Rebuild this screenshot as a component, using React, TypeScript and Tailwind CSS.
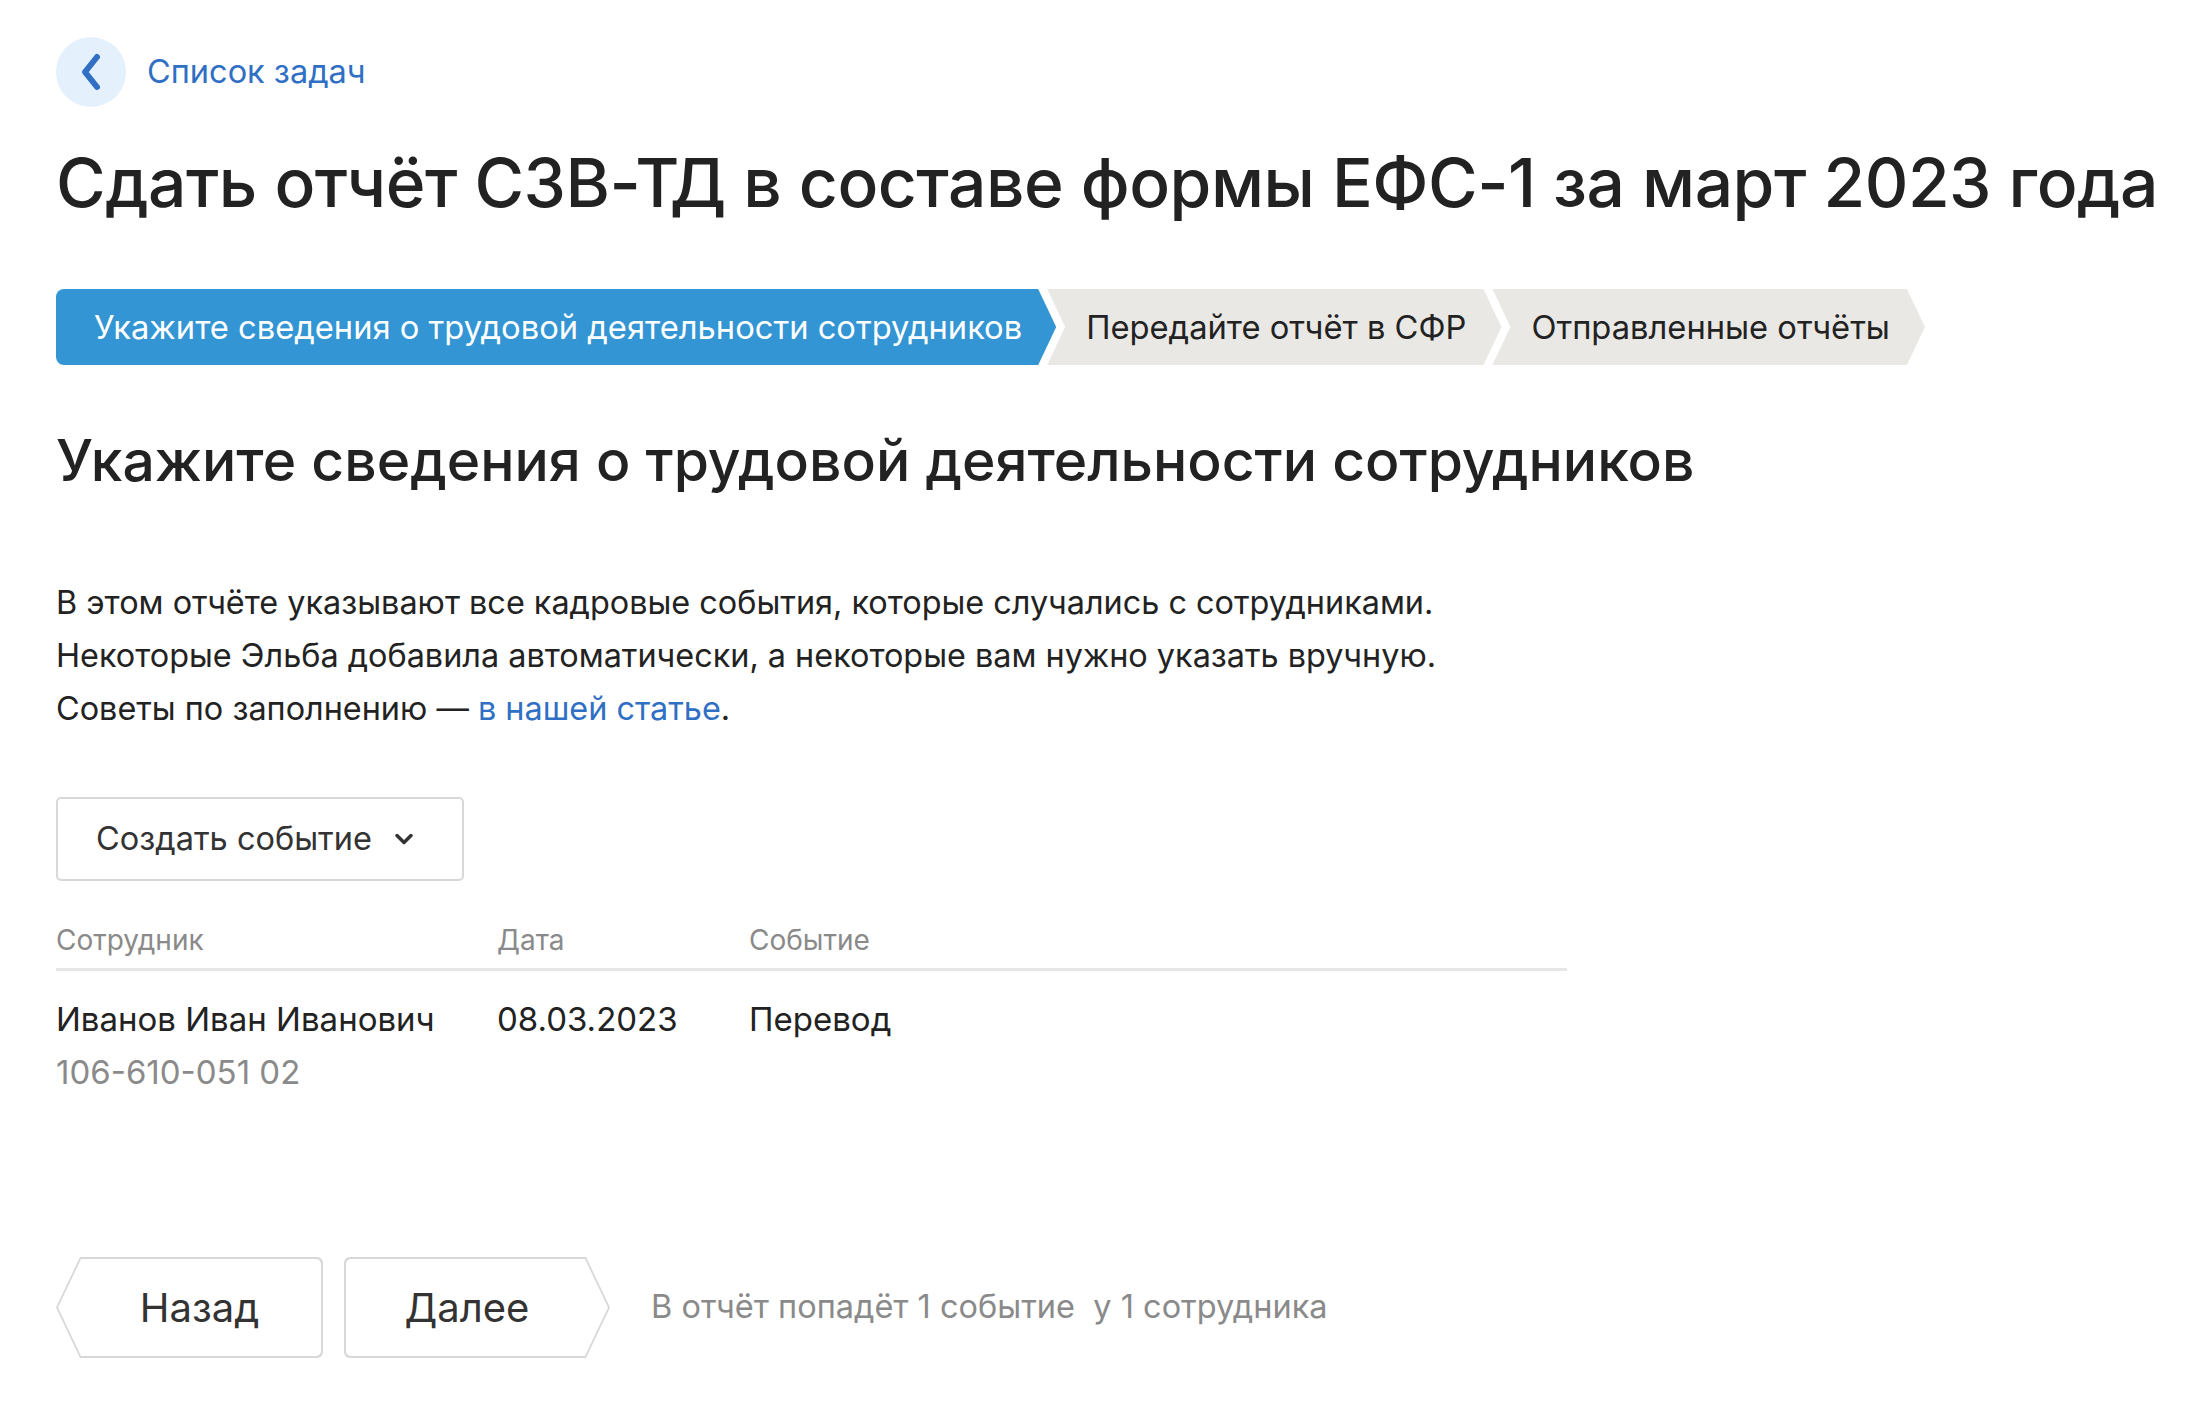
import { ChevronDown } from 'lucide-react';

const steps = [
    { title: "Укажите сведения о трудовой деятельности сотрудников", active: true },
    { title: "Передайте отчёт в СФР", active: false },
    { title: "Отправленные отчёты", active: false },
];

function Stepper() {
    return (
        <div className="flex flex-row h-[76px]">
            {steps.map((step, i) => (
                <div
                    key={step.title}
                    className={
                        i === 0
                            ? "flex items-center h-full pl-[38px] pr-[34px] rounded-l-lg bg-[#3395d3] text-white [clip-path:polygon(0_0,calc(100%-18px)_0,100%_50%,calc(100%-18px)_100%,0_100%)]"
                            : "flex items-center h-full -ml-[9px] pl-[39px] pr-[35px] bg-[#e9e8e5] text-[#222222] [clip-path:polygon(0_0,calc(100%-18px)_0,100%_50%,calc(100%-18px)_100%,0_100%,18px_50%)]"
                    }
                >
                    <span className="text-[32.7px] leading-none whitespace-nowrap">{step.title}</span>
                </div>
            ))}
        </div>
    );
}

export default function App() {
    return (
        <main className="min-h-[1406px] w-full bg-white pl-14 pt-[37px] text-[#222222] font-['Inter','Noto_Sans',sans-serif]">
            <a href="#" className="flex flex-row items-center gap-[21px] w-fit">
                <span className="flex items-center justify-center w-[70px] h-[70px] rounded-full bg-[#e4f1fd]">
                    <svg width="26" height="40" viewBox="0 0 26 40" fill="none">
                        <path d="M19 5 L7 20 L19 35" stroke="#2f6fc4" strokeWidth="6" strokeLinecap="round" strokeLinejoin="round" />
                    </svg>
                </span>
                <span className="text-[32.5px] text-[#2f6fc4]">Список задач</span>
            </a>

            <h1 className="mt-[33px] text-[67.7px] leading-[84px] font-medium tracking-[-0.5px] whitespace-nowrap">
                Сдать отчёт СЗВ-ТД в составе формы ЕФС-1 за март 2023 года
            </h1>

            <div className="mt-[65px]">
                <Stepper />
            </div>

            <h2 className="mt-[62px] text-[57px] leading-[68px] font-medium whitespace-nowrap">
                Укажите сведения о трудовой деятельности сотрудников
            </h2>

            <div className="mt-[81px] text-[32.4px] leading-[53px]">
                <p>В этом отчёте указывают все кадровые события, которые случались с сотрудниками.</p>
                <p>Некоторые Эльба добавила автоматически, а некоторые вам нужно указать вручную.</p>
                <p>
                    Советы по заполнению — <a href="#" className="text-[#2f6fc4]">в нашей статье</a>.
                </p>
            </div>

            <button className="mt-[62px] flex flex-row items-center gap-[18px] h-[84px] w-[408px] pl-[38px] border-2 border-[#d8d8d8] rounded-[5px] text-[32.5px] text-[#333333]">
                Создать событие
                <ChevronDown size={28} strokeWidth={3} className="text-[#333333]" />
            </button>

            <div className="mt-[38px] w-[1511px]">
                <div className="grid grid-cols-[441px_252px_1fr] pb-[7px] border-b-[3px] border-[#e6e6e6] text-[28px] text-[#8a8a8a]">
                    <span>Сотрудник</span>
                    <span>Дата</span>
                    <span>Событие</span>
                </div>
                <div className="grid grid-cols-[441px_252px_1fr] pt-[22px] text-[33px] leading-[53px]">
                    <div className="flex flex-col">
                        <span>Иванов Иван Иванович</span>
                        <span className="text-[#8a8a8a]">106-610-051 02</span>
                    </div>
                    <span>08.03.2023</span>
                    <span>Перевод</span>
                </div>
            </div>

            <div className="mt-[158px] flex flex-row items-center">
                <button className="w-[267px] h-[101px] p-[2px] bg-[#d8d8d8] [clip-path:polygon(24px_0,100%_0,100%_100%,24px_100%,0_50%)] rounded-r-[6px]">
                    <span className="flex items-center justify-center w-full h-full pl-[20px] bg-white text-[40px] text-[#333333] rounded-r-[5px] [clip-path:polygon(23px_0,100%_0,100%_100%,23px_100%,0_50%)]">
                        Назад
                    </span>
                </button>
                <button className="ml-[21px] w-[266px] h-[101px] p-[2px] bg-[#d8d8d8] [clip-path:polygon(0_0,calc(100%-24px)_0,100%_50%,calc(100%-24px)_100%,0_100%)] rounded-l-[6px]">
                    <span className="flex items-center justify-center w-full h-full pr-[20px] bg-white text-[40px] text-[#333333] rounded-l-[5px] [clip-path:polygon(0_0,calc(100%-23px)_0,100%_50%,calc(100%-23px)_100%,0_100%)]">
                        Далее
                    </span>
                </button>
                <span className="ml-[41px] text-[32.5px] text-[#8a8a8a] whitespace-pre">В отчёт попадёт 1 событие  у 1 сотрудника</span>
            </div>
        </main>
    );
}
